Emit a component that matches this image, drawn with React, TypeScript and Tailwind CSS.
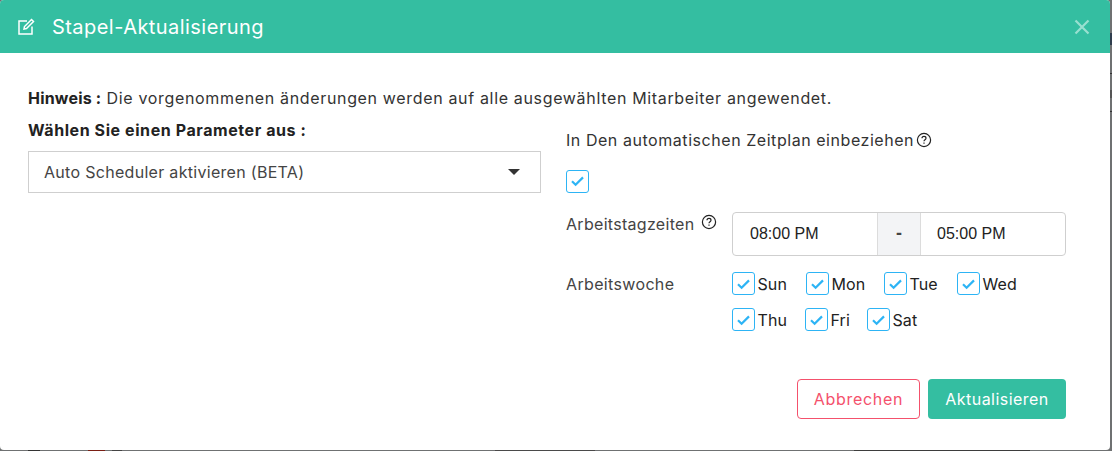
const sans = "font-['Inter','Noto_Sans',sans-serif]";

function Check({ label, className = "" }: { label?: string; className?: string }) {
  return (
    <label className={`flex items-center gap-[3px] ${className}`}>
      <span className="flex h-[22.5px] w-[22.5px] shrink-0 items-center justify-center rounded-[3px] border border-[#2db4f5] bg-white">
        <svg width="15" height="12" viewBox="0 0 15 12" fill="none">
          <path d="M2 6.3 5.6 9.8 13 2.4" stroke="#2db4f5" strokeWidth="2.2" />
        </svg>
      </span>
      {label ? <span className="text-[16px] tracking-[0.1px] text-[#222]">{label}</span> : null}
    </label>
  );
}

function HelpIcon() {
  return (
    <svg width="16" height="16" viewBox="0 0 16 16" fill="none" stroke="#222" strokeWidth="1.2">
      <circle cx="8" cy="8" r="6.6" />
      <path d="M6 6.3C6 5 6.9 4.4 8 4.4s2 .7 2 1.8c0 1.5-2 1.5-2 3.1" />
      <path d="M8 10.6v1.2" />
    </svg>
  );
}

export default function App() {
  return (
    <div className={`h-[451px] w-[1112px] overflow-hidden bg-[#6f7172] ${sans}`}>
      <div className="flex">
        <div className="h-[450px] w-[1110px] overflow-hidden rounded-[4px] bg-white">
          <div className="flex h-[53px] items-center justify-between bg-[#34bea1] pl-[18px] pr-[20px]">
            <div className="flex items-center gap-[17px]">
              <svg width="17" height="17" viewBox="0 0 17 17" fill="none" stroke="white" strokeWidth="1.5">
                <path d="M9 3H1v13h13V8.5" />
                <path d="M6.5 8.5 6 11l2.5-.5 7-7L13.5 1.5z" />
              </svg>
              <span className="text-[20px] tracking-[0.45px] text-white">Stapel-Aktualisierung</span>
            </div>
            <svg width="16" height="16" viewBox="0 0 16 16" stroke="#99e0d0" strokeWidth="2.2">
              <path d="M1.5 1.5 14.5 14.5M14.5 1.5 1.5 14.5" />
            </svg>
          </div>

          <div className="px-[28px] pt-[34px]">
            <p className="text-[16px] leading-[22px] tracking-[0.66px] text-[#333]">
              <b className="font-bold tracking-[0.2px] text-[#222]">Hinweis :</b> Die vorgenommenen änderungen werden auf alle ausgewählten Mitarbeiter angewendet.
            </p>

            <div className="mt-[2px] flex">
              <div className="w-[513px] shrink-0 pt-[8px]">
                <p className="text-[16px] font-bold leading-[22px] tracking-[0.58px] text-[#222]">Wählen Sie einen Parameter aus :</p>
                <div className="mt-[10px] flex h-[42px] items-center justify-between border border-[#cfcfcf] pl-[15px] pr-[20px] text-[16px] tracking-[0.3px] text-[#444]">
                  <span>Auto Scheduler aktivieren (BETA)</span>
                  <span className="h-0 w-0 border-x-[6px] border-t-[6px] border-x-transparent border-t-[#333]" />
                </div>
              </div>

              <div className="ml-[25px] flex-1 pt-[18px]">
                <div className="flex h-[22px] items-center gap-[2px] text-[16px] tracking-[0.55px] text-[#333]">
                  <span>In Den automatischen Zeitplan einbeziehen</span>
                  <HelpIcon />
                </div>
                <Check className="mt-[19px]" />

                <div className="mt-[19px] flex">
                  <div className="flex w-[166px] items-start gap-[7px] text-[16px] tracking-[0.3px] text-[#444]">
                    <span>Arbeitstagzeiten</span>
                    <span className="mt-[2px]">
                      <HelpIcon />
                    </span>
                  </div>
                  <div className="flex h-[44px] w-[334px] items-center overflow-hidden rounded-[4px] border border-[#cfcfcf] font-['Liberation_Sans',sans-serif] text-[16px] text-[#222]">
                    <span className="flex-1 pl-[17px]">08:00 PM</span>
                    <span className="flex h-full w-[44px] items-center justify-center border-x border-[#dcdcdc] bg-[#f3f4f6] text-[18px] font-bold text-[#444]">-</span>
                    <span className="w-[144px] pl-[16px]">05:00 PM</span>
                  </div>
                </div>

                <div className="mt-[16px] flex">
                  <span className="w-[166px] shrink-0 text-[16px] tracking-[0.35px] text-[#444]">Arbeitswoche</span>
                  <div className="flex flex-col gap-[12px]">
                    <div className="flex">
                      <Check label="Sun" className="w-[74px]" />
                      <Check label="Mon" className="w-[78px]" />
                      <Check label="Tue" className="w-[73px]" />
                      <Check label="Wed" />
                    </div>
                    <div className="flex">
                      <Check label="Thu" className="w-[73px]" />
                      <Check label="Fri" className="w-[62px]" />
                      <Check label="Sat" />
                    </div>
                  </div>
                </div>
              </div>
            </div>

            <div className="mt-[47px] flex justify-end gap-[8px] pr-[16px]">
              <button type="button" className="h-[40px] w-[123px] rounded-[4px] border border-[#f4516c] bg-white text-[16px] tracking-[0.7px] text-[#f4516c]">
                Abbrechen
              </button>
              <button type="button" className="h-[40px] w-[138px] rounded-[4px] bg-[#34bea1] text-[16px] tracking-[0.45px] text-white">
                Aktualisieren
              </button>
            </div>
          </div>
        </div>

        {/* page behind the dialog, only a sliver shows */}
        <div className="w-[2px] shrink-0">
          <div className="mt-[33px] h-[12px] bg-[#2f3d4d]" />
          <div className="mt-[28px] h-px bg-[#333]" />
          <div className="mt-[16px] h-[8px] bg-[#555]" />
          <div className="mt-[13px] h-px bg-[#333]" />
        </div>
      </div>

      <div className="flex h-px">
        <span className="ml-[28px] w-[12px] bg-[#333]" />
        <span className="ml-[48px] w-[17px] bg-[#7a1f14]" />
        <span className="ml-[7px] w-[10px] bg-[#444]" />
        <span className="ml-[373px] w-[100px] bg-[#4a4a4a]" />
        <span className="ml-[259px] w-[176px] bg-[#3d3d3d]" />
      </div>
    </div>
  );
}
